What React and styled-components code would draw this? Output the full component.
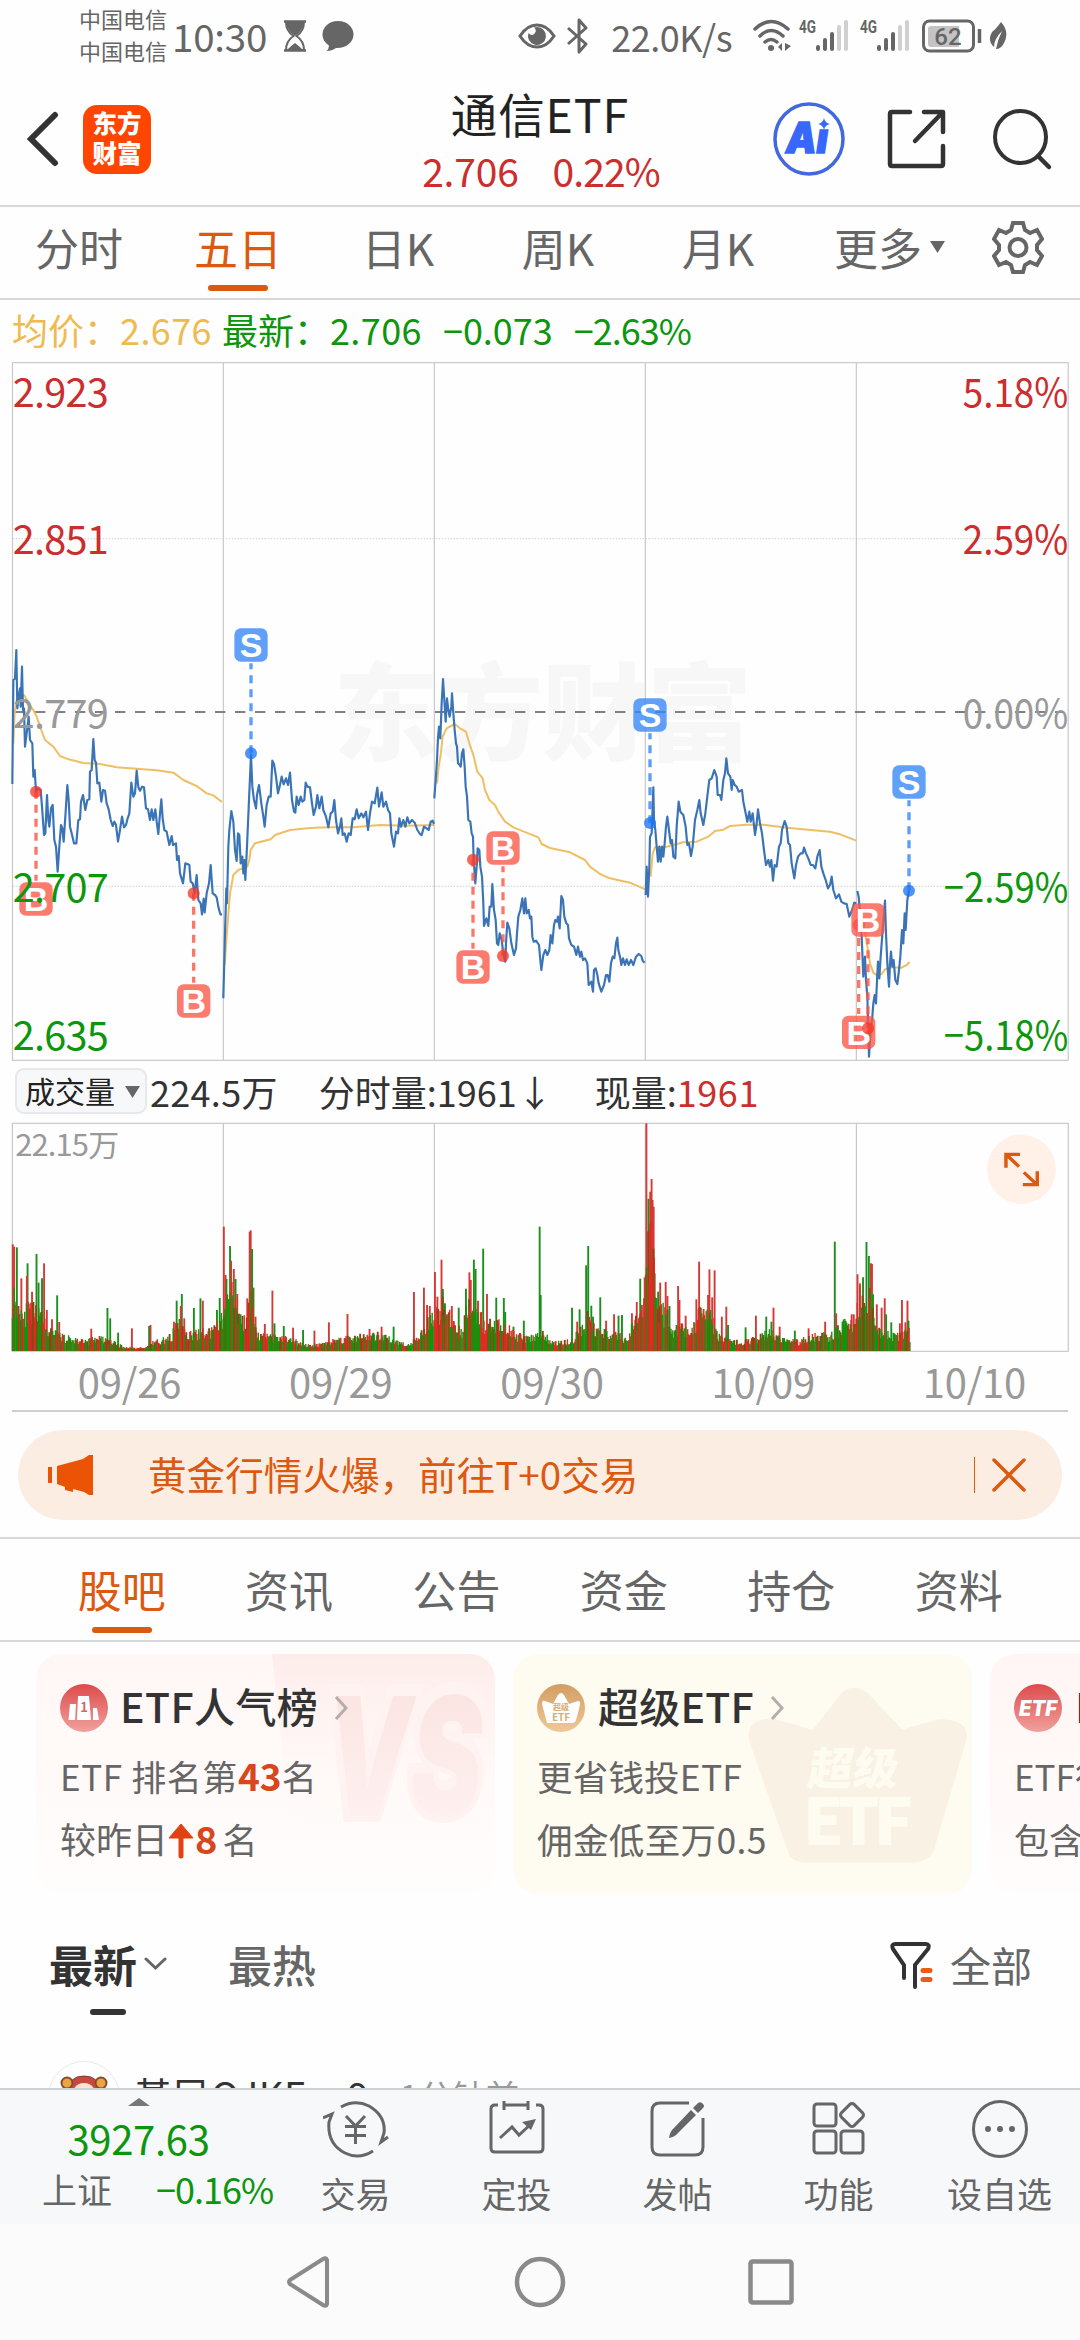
import styled, { createGlobalStyle } from 'styled-components';

const GlobalStyle = createGlobalStyle`
    * {
        box-sizing: border-box;
    }

    body {
        margin: 0;
        background: #fefefe;
        font-family: 'Noto Sans CJK SC', 'Noto Sans', sans-serif;
        color: #333;
    }

    svg {
        display: block;
        flex: none;
    }
`;

const Page = styled.div`
    width: 1080px;
    height: 2340px;
    overflow: hidden;
    display: flex;
    flex-direction: column;
    white-space: nowrap;
`;

const Text = styled.span`
    font-size: ${(p) => p.size || 35}px;
    line-height: ${(p) => p.line || 1};
    color: ${(p) => p.color || 'inherit'};
    font-weight: ${(p) => p.weight || 400};
    letter-spacing: ${(p) => p.spacing || 0}px;
    margin-left: ${(p) => p.left || 0}px;
    margin-top: ${(p) => p.top || 0}px;
`;

const StatusBar = styled.div`
    height: 76px;
    padding: 0 73px 4px 79px;
    display: flex;
    align-items: center;
    color: #666;
`;

const Carriers = styled.div`
    display: flex;
    flex-direction: column;
    font-size: 22px;
    line-height: 32px;
    width: 93px;
    padding-bottom: 3px;
`;

const StatusIcons = styled.div`
    margin-left: auto;
    display: flex;
    align-items: center;
`;

const Header = styled.header`
    height: 131px;
    border-bottom: 2px solid #d8d8d8;
    display: grid;
    grid-template-columns: 360px 360px 360px;
`;

const HeaderSide = styled.div`
    display: flex;
    align-items: center;
    padding: 0 27px 2px;
`;

const Logo = styled.div`
    width: 68px;
    height: 69px;
    margin-left: 24px;
    border-radius: 14px;
    background: #ff4500;
    color: #fff;
    font-size: 24.5px;
    font-weight: 900;
    line-height: 30px;
    text-align: center;
    padding-top: 3px;
`;

const HeaderTitle = styled.div`
    display: flex;
    flex-direction: column;
    align-items: center;
    padding-top: 14px;
`;

const PriceLine = styled.div`
    display: flex;
    gap: 34px;
    margin: 15px 0 0 2px;
    color: #cc2d2d;
`;

const PeriodTabs = styled.nav`
    height: 93px;
    border-bottom: 2px solid #d8d8d8;
    display: grid;
    grid-template-columns: 158px 160px 160px 160px 160px 172px 110px;
    color: #666;
`;

const Tab = styled.div`
    display: flex;
    flex-direction: column;
    align-items: center;
    font-size: ${(p) => p.size || 44}px;
    line-height: 1;
    padding-top: ${(p) => p.top}px;
    color: ${(p) => (p.active ? '#dc5a10' : '#666')};

    &::after {
        content: '';
        display: ${(p) => (p.active ? 'block' : 'none')};
        width: 60px;
        height: 6px;
        margin-top: ${(p) => p.gap}px;
        border-radius: 3px;
        background: #dc5a10;
    }
`;

const MoreTab = styled.div`
    display: flex;
    align-items: flex-start;
    gap: 8px;
    padding: 18px 0 0 36px;

    svg {
        margin-top: 16px;
    }
`;

const GearTab = styled.div`
    padding: 14px 0 0 22px;
`;

const QuoteRow = styled.div`
    height: 62px;
    padding: 0 0 3px 12px;
    display: flex;
    align-items: center;
    color: #0d960d;
`;

const VolumeRow = styled.div`
    height: 60px;
    padding: 0 0 2px 15px;
    display: flex;
    align-items: center;
`;

const Picker = styled.div`
    width: 132px;
    height: 46px;
    display: flex;
    align-items: center;
    gap: 10px;
    padding: 0 9px 3px 8px;
    border: 2px solid #e6e8eb;
    border-radius: 9px;
    background: #f7f8fa;
    color: #222;
    font-size: 30px;
    line-height: 1;

    svg {
        margin-top: 4px;
    }
`;

const DateRow = styled.div`
    height: 60px;
    margin: 0 12px;
    border-bottom: 2px solid #d0d0d0;
    display: grid;
    grid-template-columns: repeat(5, 1fr);
    align-items: center;
    justify-items: center;
    color: #999;

    span {
        padding-left: 24px;
    }
`;

const Banner = styled.div`
    height: 90px;
    margin: 18px 18px 17px;
    border-radius: 45px;
    background: #fcede3;
    color: #dc5a10;
    display: flex;
    align-items: center;
    padding: 0 36px 0 30px;
`;

const BannerText = styled.div`
    margin: 0 auto 3px 54px;
    font-size: 38.6px;
    line-height: 1;
`;

const BannerEnd = styled.div`
    display: flex;
    align-items: center;
    gap: 17px;

    &::before {
        content: '';
        width: 1px;
        height: 36px;
        background: #dc5a10;
    }
`;

const SectionTabs = styled.nav`
    height: 105px;
    border-top: 2px solid #d8d8d8;
    border-bottom: 2px solid #d8d8d8;
    padding: 0 38px;
    display: grid;
    grid-template-columns: repeat(6, 167.4px);
`;

const Cards = styled.div`
    height: 241px;
    margin-top: 12px;
    padding-left: 36px;
    display: flex;
    gap: 18px;
    overflow: hidden;
`;

const Card = styled.div`
    position: relative;
    flex: none;
    width: 459px;
    height: 240px;
    border-radius: 25px;
    overflow: hidden;
    background: ${(p) => p.fill};
    padding: 30px 24px;
    color: #666;
`;

const CardArt = styled.svg`
    position: absolute;
    inset: 0;
`;

const CardBody = styled.div`
    position: relative;
    display: flex;
    flex-direction: column;
`;

const CardTitle = styled.div`
    height: 48px;
    display: flex;
    align-items: center;
    color: #333;
    margin-bottom: 26px;

    span {
        margin-bottom: 4px;
    }
`;

const CardLine = styled.div`
    height: 35px;
    margin-bottom: 28px;
    display: flex;
    align-items: center;

    svg {
        margin-top: 6px;
    }
`;

const FeedTabs = styled.div`
    height: 150px;
    padding: 47px 48px 0 48px;
    display: flex;
    align-items: flex-start;
`;

const FeedActive = styled.div`
    display: flex;
    flex-direction: column;
    align-items: center;
    width: 120px;

    &::after {
        content: '';
        width: 36px;
        height: 6px;
        margin-top: 23px;
        border-radius: 3px;
        background: #333;
    }
`;

const FeedActiveLabel = styled.div`
    display: flex;
    align-items: center;
    gap: 7px;
`;

const FeedFilter = styled.div`
    margin: -1px 0 0 auto;
    display: flex;
    align-items: center;
    gap: 16px;
`;

const Post = styled.div`
    height: 44px;
    padding: 17px 0 0 48px;
    display: flex;
    align-items: flex-start;
    overflow: hidden;
`;

const PostAuthor = styled.div`
    width: 240px;
    margin: 7px 26px 0 14px;
    font-size: 38px;
    letter-spacing: 0.5px;
    line-height: 52px;
`;

const PostTime = styled.div`
    margin-top: 11px;
    font-size: 33px;
    line-height: 46px;
    letter-spacing: 0.6px;
    color: #999;
`;

const BottomBar = styled.footer`
    height: 136px;
    border-top: 2px solid #ccd2d6;
    background: #f6f8fa;
    display: grid;
    grid-template-columns: 275px 161px 161px 161px 161px 161px;
    color: #666;
`;

const IndexCell = styled.div`
    display: flex;
    flex-direction: column;
    align-items: center;
    padding-top: 8px;
    padding-left: 2px;
    color: #0d960d;
`;

const IndexChange = styled.div`
    display: flex;
    align-items: center;
    gap: 44px;
    align-self: flex-start;
    margin: 12px 0 0 40px;
`;

const BarItem = styled.div`
    display: flex;
    flex-direction: column;
    align-items: center;
    gap: 15px;
    padding-top: 8px;
    font-size: 35px;
    line-height: 1;
`;

const SystemNav = styled.div`
    height: 116px;
    background: #fbfbfb;
    display: flex;
    justify-content: center;
    align-items: center;
    gap: 182px;
`;

// Price traces, one per session, with the offset that places each in the chart.
const sessions = [
    {
        dx: 0,
        dy: 0,
        price: '37,552 40,240 45,236 49,150 52,325 56,290 60,265 62,320 66,200 69,330 72,325 75,440 80,400 86,350 90,420 97,430 100,530 104,510 108,575 114,565 122,570 126,620 132,705 136,700 141,585 145,660 148,680 153,625 158,615 163,720 168,740 173,815 178,740 183,675 187,685 191,725 196,650 202,555 206,600 210,680 215,700 222,730 229,730 235,660 240,658 243,605 249,585 256,630 262,600 268,598 270,515 275,510 280,417 284,480 288,488 292,550 298,548 304,605 309,570 315,572 320,610 326,628 332,660 338,678 343,665 348,675 354,725 360,690 366,650 372,682 378,675 383,655 388,640 394,548 400,590 405,580 410,512 415,562 420,572 426,560 432,562 438,625 444,628 450,660 455,628 460,660 466,628 470,665 475,702 480,640 484,598 488,655 493,690 500,695 508,735 515,708 519,735 528,730 531,780 536,768 540,820 549,850 556,790 562,792 568,795 572,845 578,850 584,880 590,825 595,900 602,910 606,943 611,896 614,937 620,880 627,850 632,795 638,880 645,885 650,892 656,925 661,943 666,943',
        average: '40,430 44,340 50,300 60,290 72,285 80,298 90,318 100,330 110,350 122,385 135,420 160,440 180,468 200,476 250,489 300,492 350,502 410,506 470,511 520,518 550,540 590,558 620,580 640,586 666,606',
    },
    {
        dx: 0,
        dy: 0,
        price: '670,1195 675,1000 679,865 681,910 685,740 688,690 694,633 700,665 705,750 710,783 714,700 718,705 722,790 727,770 730,820 733,780 736,840 741,740 747,600 753,465 757,560 762,600 768,625 771,585 777,555 784,610 790,650 794,680 800,615 806,590 812,590 817,482 822,492 828,530 834,580 840,555 845,530 851,553 858,535 864,555 870,518 876,600 882,635 886,638 890,590 896,615 902,590 907,605 913,600 917,548 922,560 930,562 936,610 941,645 948,620 952,585 958,625 965,590 970,630 978,650 985,682 992,640 998,635 1003,600 1008,660 1014,700 1020,680 1024,655 1028,705 1034,700 1040,725 1046,700 1052,705 1058,655 1064,658 1070,628 1076,655 1084,640 1090,652 1098,635 1104,690 1110,640 1116,605 1124,610 1132,563 1137,620 1145,577 1150,620 1158,605 1164,630 1170,640 1174,700 1182,740 1188,695 1194,700 1198,655 1203,680 1210,660 1216,680 1222,652 1228,670 1236,660 1244,668 1252,690 1260,702 1265,705 1272,680 1280,685 1286,690 1292,665 1298,662 1302,672',
        average: '674,1095 682,980 690,880 700,825 715,810 742,800 748,780 752,750 765,730 812,718 825,705 870,690 930,684 985,682 1060,682 1140,675 1220,677 1302,675',
    },
    {
        dx: 1260,
        dy: 60,
        price: '43,535 47,480 51,420 54,355 57,320 61,355 65,250 69,177 73,240 77,305 81,235 85,270 89,290 94,260 96,220 100,280 104,330 108,370 111,380 114,430 119,435 122,440 126,400 130,388 134,440 137,500 141,530 145,600 151,605 155,640 159,650 161,720 166,790 170,740 173,685 178,690 181,740 186,770 190,850 192,918 199,895 205,918 209,860 214,860 217,792 222,870 227,900 231,970 235,975 239,940 245,960 250,1000 256,1025 258,970 262,908 268,925 274,970 282,1005 288,985 291,940 295,890 301,870 307,835 312,880 316,835 320,880 326,870 330,895 334,890 337,950 341,965 348,962 357,975 360,1010 364,1050 370,1005 376,990 382,1005 388,990 392,945 397,970 402,915 406,900 411,905 414,890 419,925 424,828 429,840 433,890 439,910 444,915 447,955 454,975 462,980 469,1005 474,980 480,1010 484,995 489,1020 495,1015 502,1030 506,1095 514,1085 519,1115 522,1050 527,1045 532,1065 536,1090 544,1115 552,1095 558,1065 563,1065 568,1085 573,1030 578,1010 583,1015 588,970 592,953 595,990 600,1010 604,1035 609,1015 615,1035 620,1018 626,1035 633,1020 640,1035 648,1010 656,1002 664,1008 668,1022 674,1028',
        average: '51,490 56,440 62,405 68,350 80,325 104,312 120,325 138,335 148,370 160,405 172,455 188,475 195,510 208,540 225,555 235,575 255,605 280,622 355,652 365,672 390,684 450,697 495,720 510,740 540,762 570,775 630,788 676,808',
    },
    {
        dx: 1920,
        dy: 240,
        price: '17,645 20,560 24,650 28,560 30,470 35,460 40,322 42,420 46,450 50,500 54,545 58,500 62,545 66,500 70,530 74,490 78,440 82,410 87,450 92,490 96,480 100,530 106,535 110,440 116,365 121,395 130,405 137,440 142,495 147,490 153,528 158,500 165,420 172,390 178,360 182,400 190,435 196,400 203,340 208,300 215,295 223,270 230,290 233,345 240,345 244,360 250,300 255,280 259,235 264,280 271,290 275,330 278,300 284,315 290,320 296,335 306,330 310,365 317,400 322,425 328,395 332,425 338,400 345,465 350,430 354,388 360,430 366,460 372,510 378,555 385,540 390,560 394,540 399,602 404,555 410,560 417,500 422,490 426,450 434,423 440,440 445,490 450,495 455,550 463,595 468,555 474,530 482,520 488,520 492,503 498,520 505,535 512,555 519,555 526,565 532,530 539,510 544,560 550,580 557,600 564,625 570,615 575,590 580,630 588,655 597,643 604,665 612,670 620,672 628,710 636,690 643,668 649,670',
        average: '32,590 38,520 45,502 80,500 130,487 170,485 205,470 225,453 250,449 270,438 320,434 370,434 440,443 570,455 600,463 649,482',
    },
    {
        dx: 1920,
        dy: 240,
        price: '652,633 656,650 660,700 665,770 670,890 675,830 678,900 682,950 685,1050 687,1130 692,1050 697,1010 700,970 704,945 708,970 712,880 714,845 718,895 722,830 728,750 735,662 738,760 742,850 747,920 750,850 753,815 757,860 761,840 766,900 772,912 777,870 781,830 786,750 790,790 794,700 797,750 802,660 807,632',
        average: '665,690 672,740 682,800 690,850 700,878 712,887 725,882 735,868 750,862 785,863 800,855 809,846',
    },
];

// x, dot y, tag y
const trades = [
    ['B', 108, 575, 897],
    ['B', 581, 880, 1203],
    ['S', 753, 460, 135],
    ['B', 1419, 779, 1101],
    ['B', 1509, 1068, 744],
    ['S', 1950, 669, 345],
    ['B', 2576, 975, 1297],
    ['B', 2604, 1285, 960],
    ['S', 2727, 872, 546],
];

const priceLabels = [
    ['2.923', '5.18%', -580, '#cc2d2d'],
    ['2.851', '2.59%', -137, '#cc2d2d'],
    ['2.779', '0.00%', 384, '#999'],
    ['2.707', '−2.59%', 907, '#0d960d'],
    ['2.635', '−5.18%', 1351, '#0d960d'],
];

const dividers = [670, 1303, 1936, 2569];

function PriceChart() {
    return (
        <svg width="1080" height="701" viewBox="0 -717 3240 2103">
            <text x="1000" y="455" fontSize="316" fontWeight="900" fill="#f7f7f7" textLength="1256">东方财富</text>
            <g stroke="#c8c8c8" strokeWidth="3.500" fill="none">
                <rect x="37.500" y="-712" width="3167" height="2093" />
                {dividers.map((x) => <line key={x} x1={x} x2={x} y1="-712" y2="1381" />)}
                <path d="M38 -184H3204M38 859H3204" strokeDasharray="3 6" />
            </g>
            <path d="M45 336H3190" stroke="#808080" strokeWidth="6" strokeDasharray="31 29" />
            {sessions.map((s, i) => (
                <g key={i} transform={`translate(${s.dx} ${s.dy})`} fill="none" strokeLinejoin="round">
                    <polyline points={s.average} stroke="#eebf63" strokeWidth="6" />
                    <polyline points={s.price} stroke="#3a74b6" strokeWidth="6.500" />
                </g>
            ))}
            {trades.map(([side, x, dot, tag], i) => {
                const color = side === 'B' ? '#fa5746' : '#3485f7';
                const dir = tag > dot ? -1 : 1;
                return (
                    <g key={i}>
                        <line x1={x} x2={x} y1={tag + dir * 55} y2={dot} stroke={color} strokeWidth="10" strokeDasharray="24 18" strokeDashoffset="6" opacity="0.8" />
                        <circle cx={x} cy={dot} r="18" fill={side === 'B' ? '#f23a2c' : '#1c76f5'} opacity="0.78" />
                        <rect x={x - 50} y={tag - 50} width="100" height="100" rx="20" fill={color} opacity="0.78" />
                        <text x={x} y={tag + 37} fontSize="102" fontFamily="'Liberation Sans', sans-serif" fontWeight="700" fill="#fff" textAnchor="middle">{side}</text>
                    </g>
                );
            })}
            {priceLabels.map(([left, right, y, color]) => {
                const negative = right.length > 5;
                return (
                    <g key={left} fontSize="119" fill={color}>
                        <text x="38" y={y} textLength="288">{left}</text>
                        <text x={negative ? 2831 : 2888} y={y} textLength={negative ? 374 : 317} lengthAdjust="spacingAndGlyphs">{right}</text>
                    </g>
                );
            })}
        </svg>
    );
}

// Tops of the ordinary bars; the spikes below rise out of them.
const volumeBase = [
    [35, 700], [60, 760], [100, 770], [128, 800], [145, 840], [170, 848], [200, 860], [240, 868], [290, 858], [330, 875], [360, 890], [420, 893], [450, 870], [490, 860], [520, 810], [545, 850], [580, 840], [620, 835], [645, 790], [660, 690], [680, 690], [700, 800], [715, 800], [730, 700], [745, 850], [790, 855], [830, 860], [900, 885], [960, 870], [1000, 858], [1100, 850], [1150, 870], [1190, 880], [1220, 840], [1250, 800], [1285, 740], [1310, 800], [1340, 840], [1360, 750], [1385, 750], [1400, 800], [1430, 810], [1460, 820], [1490, 840], [1520, 860], [1568, 850],
    [1573, 840], [1608, 875], [1658, 870], [1688, 830], [1708, 790], [1728, 830], [1768, 840], [1818, 860], [1848, 800], [1873, 740], [1880, 520], [1898, 560], [1913, 750], [1938, 780], [1953, 840], [1978, 820], [2008, 840], [2028, 780], [2068, 790], [2083, 850], [2118, 865], [2148, 875], [2198, 860], [2228, 840], [2268, 860], [2318, 870], [2368, 850], [2418, 850], [2448, 815], [2483, 810], [2498, 710], [2528, 730], [2543, 830], [2568, 830], [2588, 850], [2608, 850], [2640, 840], [2644, 900],
];

const volumeSpikes = '37,583r 41,590r 49,592g 62,685r 80,640g 78,678r 93,725r 106,612g 112,698g 128,640r 122,685g 166,736g 136,780r 151,808r 172,816r 312,774g 320,805g 265,836r 343,848g 383,835r 433,828g 437,825r 513,752g 528,732g 525,768r 505,815r 563,774g 582,745g 589,752r 535,805r 638,744g 630,780g 650,530r 655,675r 668,588g 671,632r 679,657r 684,687g 689,732r 718,745r 725,545r 728,541r 732,597g 736,713g 742,800r 791,722r 797,820g 769,822r 824,828g 851,833r 880,840g 913,842r 955,817r 1009,792r 1108,830r 1143,830g 1073,837r 1202,726r 1231,713r 1240,765r 1248,768r 1263,666r 1282,629r 1286,717g 1270,740r 1292,760g 1312,768r 1332,773g 1353,716g 1363,667r 1367,690r 1376,629g 1381,657g 1388,752r 1403,596g 1414,732r 1441,743g 1463,744g 1467,786g 1521,812g 1491,830g 1567,530g 1570,735g 1661,773g 1683,778g 1702,646g 1708,588g 1717,767g 1743,742g 1676,815r 1722,800g 1760,812r 1783,793r 1796,797g 1806,795g 1835,790r 1849,756r 1859,686g 1864,765r 1872,682r 1877,220r 1883,446g 1888,425r 1892,387r 1895,450r 1898,470r 1901,670g 1906,744g 1911,725g 1917,698r 1933,696r 1938,738r 1944,768g 1969,708r 1973,750r 1991,797r 2022,748r 2030,635r 2035,773g 2043,777r 2060,658r 2056,735r 2068,742r 2075,661r 2096,800r 2109,770r 2114,825g 2165,832g 2195,797r 2225,800g 2246,773r 2240,815g 2264,830r 2308,842g 2348,835r 2396,815r 2424,575g 2428,790r 2450,808g 2473,793r 2479,793r 2490,673r 2497,700r 2506,682g 2516,576g 2523,618g 2529,640r 2532,642r 2535,733g 2546,763r 2560,773r 2569,745r 2573,793g 2588,817g 2613,820r 2619,750r 2629,817r 2635,752r 2638,812g';

function baseTop(x) {
    for (let i = 1; i < volumeBase.length; i++) {
        const [x0, y0] = volumeBase[i - 1];
        const [x1, y1] = volumeBase[i];
        if (x <= x1) return y0 + ((y1 - y0) * (x - x0)) / (x1 - x0);
    }
    return 900;
}

function volumePaths() {
    const paths = { r: '', g: '', dark: '' };
    let seed = 11;
    const next = () => {
        seed = (seed * 16807) % 2147483647;
        return seed / 2147483647;
    };
    for (let x = 36; x < 2644; x += 2.55) {
        const top = 903 - (903 - baseTop(x)) * (0.5 + next() * 0.6);
        const pick = next();
        const kind = pick < 0.38 ? 'r' : pick < 0.72 ? 'g' : 'dark';
        paths[kind] += `M${x.toFixed(1)} 903V${top.toFixed(0)}`;
    }
    return paths;
}

function VolumeChart() {
    const paths = volumePaths();
    return (
        <svg width="1080" height="230" viewBox="0 216 3136 690" preserveAspectRatio="none">
            <g stroke="#c8c8c8" strokeWidth="3.500" fill="none">
                <rect x="36" y="220" width="3066" height="684" />
                {dividers.map((x) => <line key={x} x1={x * 0.968} x2={x * 0.968} y1="220" y2="904" />)}
            </g>
            <text x="44" y="318" fontSize="90" fill="#999" textLength="302">22.15万</text>
            <g strokeWidth="5.500" fill="none">
                {volumeSpikes.split(' ').map((s) => {
                    const [x, y] = s.slice(0, -1).split(',');
                    return <path key={s} d={`M${x} 903V${y}`} stroke={s.endsWith('r') ? '#d43a35' : '#1b8f1b'} />;
                })}
                <path d={paths.dark} stroke="#824a13" />
                <path d={paths.r} stroke="#e02a24" strokeWidth="4" />
                <path d={paths.g} stroke="#109409" strokeWidth="4" />
            </g>
            <ellipse cx="2966" cy="358" rx="100" ry="104" fill="#fff0e8" />
            <path d="M2921 353V313H2962M2923 315L2959 350M2973 367L3011 404M2970 404H3012V364" fill="none" stroke="#dc5a10" strokeWidth="10" />
        </svg>
    );
}

const Down = ({ size = 15 }) => (
    <svg width={size} height="12" viewBox="0 0 15 12"><path d="M0 0H15L7.5 12Z" fill="#666" /></svg>
);

const ChevronIcon = styled.svg`
    margin-left: 16px;
`;

const Chevron = () => (
    <ChevronIcon width="14" height="26" viewBox="0 0 14 26">
        <path d="M2 2L12 13L2 24" fill="none" stroke="#b3adab" strokeWidth="3" />
    </ChevronIcon>
);

const StatusIcon = styled.svg`
    margin-left: ${(p) => p.$left}px;
`;

const Signal = ({ left }) => (
    <StatusIcon $left={left} width="50" height="34" viewBox="0 0 50 34">
        <text x="0" y="14" fontSize="17.500" fontWeight="700" fontFamily="Roboto, sans-serif" fill="#666" textLength="17" lengthAdjust="spacingAndGlyphs">4G</text>
        <path d="M19 28V30M26 21V30M33 15V30" stroke="#666" strokeWidth="4" strokeLinecap="round" />
        <path d="M40 8V30M47 3V30" stroke="#d0d0d0" strokeWidth="4" strokeLinecap="round" />
    </StatusIcon>
);

const PodiumIcon = () => (
    <svg width="48" height="48" viewBox="0 0 48 48">
        <defs>
            <linearGradient id="red" x1="0" y1="0" x2="0" y2="1">
                <stop offset="0" stopColor="#dc4b4a" />
                <stop offset="1" stopColor="#f0a19e" />
            </linearGradient>
        </defs>
        <circle cx="24" cy="24" r="24" fill="url(#red)" />
        <path d="M10 20H16L15 36H8.500ZM18 12H29L31 36H17ZM33 24H37L39 36H33Z" fill="#fff" />
        <text x="24" y="28" fontSize="13" fontWeight="700" textAnchor="middle" fill="#dc6463">1</text>
    </svg>
);

const crown = 'M66 240Q45 242 41 228L2 77Q-4 46 21 43Q28 43 65 59L93 10Q104-7 120 8L155 58L192 44Q222 44 220 70L187 222Q183 240 164 240Z';

const CrownIcon = () => (
    <svg width="48" height="48" viewBox="0 0 48 48">
        <defs>
            <linearGradient id="gold" x1="0" y1="0" x2="0" y2="1">
                <stop offset="0" stopColor="#d29e63" />
                <stop offset="1" stopColor="#efc797" />
            </linearGradient>
        </defs>
        <circle cx="24" cy="24" r="24" fill="url(#gold)" />
        <path d="M10 39L5 20Q5 16 8 17L16 20L21 11Q24 7 27 11L32 20L41 17Q44 17 43 21L39 36Q38 39 35 39Z" fill="#fff" />
        <text x="24" y="26" fontSize="8" fontWeight="700" textAnchor="middle" fill="#d9ac76">超级</text>
        <text x="24" y="36.500" fontSize="10" fontWeight="700" textAnchor="middle" fill="#d9ac76">ETF</text>
    </svg>
);

const periods = ['分时', '五日', '日K', '周K', '月K'];
const sections = ['股吧', '资讯', '公告', '资金', '持仓', '资料'];
const dates = ['09/26', '09/29', '09/30', '10/09', '10/10'];

function App() {
    return (
        <>
            <GlobalStyle />
            <Page>
                <StatusBar>
                    <Carriers>
                        <span>中国电信</span>
                        <span>中国电信</span>
                    </Carriers>
                    <Text size={38.5} line={1.4} spacing={-0.2}>10:30</Text>
                    <StatusIcon $left={16} width="24" height="32" viewBox="0 0 24 32">
                        <path d="M1 1.500H23M1 30.500H23" stroke="#666" strokeWidth="2.500" />
                        <path d="M3 2H21Q21 11 13.500 16Q21 21 21 30H3Q3 21 10.500 16Q3 11 3 2Z" fill="none" stroke="#666" strokeWidth="2" />
                        <path d="M3 2H21Q20 11 12 16Q4 11 3 2ZM5 29Q8 26 12 23Q16 26 19 29Z" fill="#666" />
                    </StatusIcon>
                    <StatusIcon $left={15} width="32" height="32" viewBox="0 0 32 32">
                        <path d="M16 1C7 1 .500 7 .500 14.500C.500 19 3 23 7 25.500Q7 29 4.500 31Q10 31 14 28C24 28.500 31.500 22 31.500 14.500C31.500 7 25 1 16 1Z" fill="#666" />
                    </StatusIcon>
                    <StatusIcons>
                        <svg width="38" height="28" viewBox="0 0 38 28">
                            <path d="M2 14Q9 3 19 3T36 14Q29 25 19 25T2 14Z" fill="none" stroke="#666" strokeWidth="3" />
                            <path d="M19 5A9 9 0 1 1 10.500 11Q14 15 17 11Q19 8 16 5.500Z" fill="#666" />
                        </svg>
                        <StatusIcon $left={11} width="22" height="36" viewBox="0 0 22 36">
                            <path d="M1 10L19 26L12 34V2L19 10L1 26" fill="none" stroke="#666" strokeWidth="3" strokeLinejoin="round" />
                        </StatusIcon>
                        <Text size={36} line={1.4} left={22} spacing={-0.5}>22.0K/s</Text>
                        <StatusIcon $left={21} width="38" height="33" viewBox="0 0 38 33">
                            <path d="M2 10Q18-5 35 10M7 17Q18 6 30 17M12 23Q18 18 24 23" fill="none" stroke="#666" strokeWidth="3.500" strokeLinecap="round" />
                            <circle cx="18" cy="29" r="3" fill="#666" />
                            <path d="M29 24V32L25 28ZM32 24V32L38 27Z" fill="#666" />
                        </StatusIcon>
                        <Signal left={8} />
                        <Signal left={11} />
                        <StatusIcon $left={12} width="60" height="34" viewBox="0 0 60 34">
                            <rect x="1.500" y="2" width="50" height="30" rx="6" fill="none" stroke="#666" strokeWidth="3" />
                            <path d="M6 10Q6 7 9 7H37V28H9Q6 28 6 25Z" fill="#c4c4c4" />
                            <path d="M57.500 10V24" stroke="#666" strokeWidth="3.500" />
                            <text x="26" y="26" fontSize="24" fontWeight="500" fontFamily="Roboto, sans-serif" fill="#666" textAnchor="middle">62</text>
                        </StatusIcon>
                        <StatusIcon $left={7} width="18" height="28" viewBox="0 0 18 28">
                            <path d="M12 0Q21 10 15 21Q12 27 7 27Q9 17 13 9Q5 17 5 25Q-2 19 3 10Q7 7 12 0Z" fill="#666" />
                        </StatusIcon>
                    </StatusIcons>
                </StatusBar>

                <Header>
                    <HeaderSide>
                        <svg width="32" height="56" viewBox="0 0 32 56">
                            <path d="M28 4L4 28L28 52" fill="none" stroke="#333" strokeWidth="6" strokeLinecap="round" strokeLinejoin="miter" />
                        </svg>
                        <Logo>东方<br />财富</Logo>
                    </HeaderSide>
                    <HeaderTitle>
                        <Text size={46.5} color="#222" spacing={0.9}>通信ETF</Text>
                        <PriceLine>
                            <Text size={39} spacing={-0.2}>2.706</Text>
                            <Text size={39} spacing={-0.9}>0.22%</Text>
                        </PriceLine>
                    </HeaderTitle>
                    <HeaderSide>
                        <StatusIcon $left={26} width="72" height="74" viewBox="0 0 72 74">
                            <ellipse cx="36" cy="37" rx="34" ry="35" fill="none" stroke="#4268dd" strokeWidth="3.500" />
                            <text x="13" y="51" fontSize="42" fontWeight="900" fontStyle="italic" fontFamily="Inter, sans-serif" fill="#3868fb" stroke="#3868fb" strokeWidth="1.500" textLength="42" lengthAdjust="spacingAndGlyphs">Aı</text>
                            <path d="M51 16Q52 21 57 22Q52 23 51 28Q50 23 45 22Q50 21 51 16Z" fill="#3868fb" />
                        </StatusIcon>
                        <StatusIcon $left={42} width="60" height="60" viewBox="0 0 60 60">
                            <path d="M23 3H5Q3 3 3 5V55Q3 57 5 57H54Q56 57 56 55V37M37 3H56V23M55 4L28 32" fill="none" stroke="#333" strokeWidth="4.500" strokeLinecap="round" strokeLinejoin="round" />
                        </StatusIcon>
                        <StatusIcon $left={44} width="62" height="64" viewBox="0 0 62 64">
                            <ellipse cx="29.500" cy="30" rx="25.500" ry="26" fill="none" stroke="#333" strokeWidth="4" />
                            <path d="M47 49L58 60" stroke="#333" strokeWidth="4.500" strokeLinecap="round" />
                        </StatusIcon>
                    </HeaderSide>
                </Header>

                <PeriodTabs>
                    {periods.map((p) => (
                        <Tab key={p} active={p === '五日' ? 1 : 0} top={18} gap={16}>{p}</Tab>
                    ))}
                    <MoreTab>
                        <Text size={44}>更多</Text>
                        <Down />
                    </MoreTab>
                    <GearTab>
                        <svg width="52" height="53" viewBox="0 0 52 53">
                            <path d="M21 2H31L33 9L38 12L45 9L50 18L45 24V29L50 35L45 44L38 41L33 44L31 51H21L19 44L14 41L7 44L2 35L7 29V24L2 18L7 9L14 12L19 9Z" fill="none" stroke="#666" strokeWidth="4" />
                            <circle cx="26" cy="26.500" r="8.500" fill="none" stroke="#666" strokeWidth="4" />
                        </svg>
                    </GearTab>
                </PeriodTabs>

                <QuoteRow>
                    <Text size={36} color="#eebb50">均价：</Text>
                    <Text size={36} color="#eebb50" spacing={0.4}>2.676</Text>
                    <Text size={36} left={10}>最新：</Text>
                    <Text size={36} spacing={0.4}>2.706</Text>
                    <Text size={36} left={21}>−0.073</Text>
                    <Text size={36} left={21} spacing={-1}>−2.63%</Text>
                </QuoteRow>

                <PriceChart />

                <VolumeRow>
                    <Picker>成交量<Down /></Picker>
                    <Text size={36} left={3} spacing={0.3}>224.5万</Text>
                    <Text size={36} left={41}>分时量:1961↓</Text>
                    <Text size={36} left={42}>现量:</Text>
                    <Text size={36} color="#cc2d2d" spacing={0.6}>1961</Text>
                </VolumeRow>

                <VolumeChart />

                <DateRow>
                    {dates.map((d) => <Text key={d} size={40} spacing={-0.2}>{d}</Text>)}
                </DateRow>

                <Banner>
                    <svg width="46" height="42" viewBox="0 0 46 42">
                        <path d="M2 13V29" stroke="#ea5404" strokeWidth="4" />
                        <path d="M9 12L35 5L41 1H45V41H41L36 38L25 35V38L17 36V33L9 30Z" fill="#ea5404" />
                    </svg>
                    <BannerText>黄金行情火爆，前往T+0交易</BannerText>
                    <BannerEnd>
                        <svg width="34" height="34" viewBox="0 0 34 34">
                            <path d="M2 2L32 32M32 2L2 32" stroke="#dc5a10" strokeWidth="3.500" strokeLinecap="round" />
                        </svg>
                    </BannerEnd>
                </Banner>

                <SectionTabs>
                    {sections.map((s) => (
                        <Tab key={s} active={s === '股吧' ? 1 : 0} top={28} gap={16}>{s}</Tab>
                    ))}
                </SectionTabs>

                <Cards>
                    <Card fill="linear-gradient(#fff7f5, #fffdfc)">
                        <CardArt width="459" height="240" viewBox="0 0 459 240">
                            <defs>
                                <linearGradient id="fade" x1="0" y1="0" x2="0" y2="1">
                                    <stop offset="0" stopColor="#fdecea" />
                                    <stop offset="0.750" stopColor="#fffaf9" stopOpacity="0" />
                                </linearGradient>
                                <linearGradient id="versus" x1="0" y1="0" x2="0" y2="1">
                                    <stop offset="0.200" stopColor="#fbe5e3" />
                                    <stop offset="1" stopColor="#fef4f3" />
                                </linearGradient>
                            </defs>
                            <path d="M236 0H459V240H262Z" fill="url(#fade)" />
                            <text x="288" y="160" fontSize="168" fontWeight="900" fontStyle="italic" fontFamily="Inter, sans-serif" fill="none" stroke="#fff3f1" strokeWidth="16" textLength="158" lengthAdjust="spacingAndGlyphs">VS</text>
                            <text x="290" y="162" fontSize="165" fontWeight="900" fontStyle="italic" fontFamily="Inter, sans-serif" fill="url(#versus)" textLength="156" lengthAdjust="spacingAndGlyphs">VS</text>
                        </CardArt>
                        <CardBody>
                            <CardTitle>
                                <PodiumIcon />
                                <Text size={41} weight={500} left={12} spacing={0.4}>ETF人气榜</Text>
                                <Chevron />
                            </CardTitle>
                            <CardLine>
                                <Text size={35} spacing={0.6}>ETF 排名第</Text>
                                <Text size={37} weight={700} color="#d8461b">43</Text>
                                <Text size={35}>名</Text>
                            </CardLine>
                            <CardLine>
                                <Text size={36}>较昨日</Text>
                                <svg width="26" height="36" viewBox="0 0 26 36">
                                    <path d="M13 1L25 15H1Z" fill="#e24213" stroke="#e24213" strokeLinejoin="round" />
                                    <path d="M13 12V33" stroke="#e24213" strokeWidth="5" strokeLinecap="round" />
                                </svg>
                                <Text size={38} weight={700} color="#d8461b" left={1}>8</Text>
                                <Text size={35} left={5}>名</Text>
                            </CardLine>
                        </CardBody>
                    </Card>
                    <Card fill="#fefbf0">
                        <CardArt width="459" height="240" viewBox="0 0 459 240">
                            <g transform="translate(235 33) scale(.995 .731)">
                                <path d={crown} fill="#f9f1e3" />
                            </g>
                            <g fontWeight="900" fill="#fefbf0">
                                <text x="294" y="131" fontSize="45" transform="skewX(-8) translate(18 0)">超级</text>
                                <text x="290" y="191" fontSize="65" textLength="110">ETF</text>
                            </g>
                        </CardArt>
                        <CardBody>
                            <CardTitle>
                                <CrownIcon />
                                <Text size={41} weight={500} left={13} spacing={0.2}>超级ETF</Text>
                                <Chevron />
                            </CardTitle>
                            <CardLine><Text size={35.500} spacing={0.2}>更省钱投ETF</Text></CardLine>
                            <CardLine><Text size={35.500} spacing={0.4}>佣金低至万0.5</Text></CardLine>
                        </CardBody>
                    </Card>
                    <Card fill="linear-gradient(#fff5f4, #fffdfc)">
                        <CardBody>
                            <CardTitle>
                                <svg width="48" height="48" viewBox="0 0 48 48">
                                    <circle cx="24" cy="24" r="24" fill="url(#red)" />
                                    <text x="5" y="32" fontSize="21" fontWeight="900" fontStyle="italic" fontFamily="Inter, sans-serif" fill="#fff" textLength="38" lengthAdjust="spacingAndGlyphs">ETF</text>
                                </svg>
                                <Text size={41} weight={500} left={13}>ETF</Text>
                            </CardTitle>
                            <CardLine><Text size={35}>ETF行情</Text></CardLine>
                            <CardLine><Text size={35}>包含全部</Text></CardLine>
                        </CardBody>
                    </Card>
                </Cards>

                <FeedTabs>
                    <FeedActive>
                        <FeedActiveLabel>
                            <Text size={44} weight={700}>最新</Text>
                            <svg width="23" height="14" viewBox="0 0 23 14">
                                <path d="M2 2L11.500 11L21 2" fill="none" stroke="#666" strokeWidth="3" strokeLinecap="round" />
                            </svg>
                        </FeedActiveLabel>
                    </FeedActive>
                    <Text size={44} weight={500} color="#666" left={60}>最热</Text>
                    <FeedFilter>
                        <svg width="44" height="48" viewBox="0 0 44 48">
                            <path d="M14 37V24L3 8Q1 3 5 3H36Q40 3 38 8L25 24V46" fill="none" stroke="#333" strokeWidth="4" strokeLinecap="round" />
                            <path d="M33 29.500H40M33 38.500H40" stroke="#ea5c14" strokeWidth="5" strokeLinecap="round" />
                        </svg>
                        <Text size={41} color="#666">全部</Text>
                    </FeedFilter>
                </FeedTabs>

                <Post>
                    <svg width="72" height="72" viewBox="0 0 72 72">
                        <circle cx="36" cy="36" r="35.500" fill="#fff" stroke="#e8e8e8" />
                        <path d="M20 32Q20 15 36 15T52 32Z" fill="#c9483f" stroke="#7d3c31" />
                        <path d="M24 34Q26 22 36 22T48 34Z" fill="#fbe3d5" />
                        <circle cx="19" cy="22" r="5.500" fill="#e9a540" stroke="#8a4b2c" strokeWidth="2" />
                        <circle cx="53" cy="22" r="5.500" fill="#e9a540" stroke="#8a4b2c" strokeWidth="2" />
                    </svg>
                    <PostAuthor>基民QJKFae9</PostAuthor>
                    <PostTime>1分钟前</PostTime>
                </Post>

                <BottomBar>
                    <IndexCell>
                        <svg width="22" height="8" viewBox="0 0 22 8"><path d="M0 8L11 0L22 8Z" fill="#777" /></svg>
                        <Text size={40} spacing={-0.3} top={12}>3927.63</Text>
                        <IndexChange>
                            <Text size={35} color="#666">上证</Text>
                            <Text size={36} spacing={-1}>−0.16%</Text>
                        </IndexChange>
                    </IndexCell>
                    <BarItem>
                        <svg width="66" height="62" viewBox="0 0 66 62">
                            <g fill="none" stroke="#666" strokeWidth="3">
                                <path d="M18 9Q32 1 46 8Q63 18 61 35L58 44L65 39M50 53Q36 62 22 55Q4 46 6 24L9 16L0 20" />
                                <path d="M23 18L32.500 28L42 18M22 28.500H43M22 37.500H43M32.500 28V46" />
                            </g>
                        </svg>
                        交易
                    </BarItem>
                    <BarItem>
                        <svg width="58" height="62" viewBox="0 0 58 62">
                            <path d="M10 7H7Q3 7 3 11V50Q3 54 7 54H51Q55 54 55 50V11Q55 7 51 7H48M16 3V12M40 3V12M16 7H40" fill="none" stroke="#666" strokeWidth="3" />
                            <path d="M12 40L24 29L31 37L44 25" fill="none" stroke="#666" strokeWidth="3" />
                            <path d="M34 24L48 21L43 32Z" fill="#666" />
                        </svg>
                        定投
                    </BarItem>
                    <BarItem>
                        <svg width="58" height="62" viewBox="0 0 58 62">
                            <path d="M40 5H11Q3 5 3 13V49Q3 57 11 57H46Q54 57 54 49V20" fill="none" stroke="#666" strokeWidth="3" />
                            <path d="M20 40Q21 33 25 30L42 12L47 17L29 35Q26 39 20 40ZM44 10L49 5Q52 3 54 6Q56 8 54 10L49 15Z" fill="#666" />
                        </svg>
                        发帖
                    </BarItem>
                    <BarItem>
                        <svg width="58" height="62" viewBox="0 0 58 62">
                            <g fill="none" stroke="#666" strokeWidth="3">
                                <rect x="4" y="6" width="22" height="22" rx="3" />
                                <rect x="4" y="33" width="22" height="22" rx="3" />
                                <rect x="31" y="33" width="22" height="22" rx="3" />
                                <rect x="33" y="8" width="18" height="18" rx="3" transform="rotate(45 42 17)" />
                            </g>
                        </svg>
                        功能
                    </BarItem>
                    <BarItem>
                        <svg width="58" height="62" viewBox="0 0 58 62">
                            <ellipse cx="29" cy="31" rx="26.500" ry="27.500" fill="none" stroke="#666" strokeWidth="3" />
                            <path d="M17 31H17.010M29 31H29.010M41 31H41.010" stroke="#666" strokeWidth="6" strokeLinecap="round" />
                        </svg>
                        设自选
                    </BarItem>
                </BottomBar>

                <SystemNav>
                    <svg width="46" height="56" viewBox="0 0 46 56">
                        <path d="M41 6V50Q40 53 37 51L4 30Q2 28 4 26L37 5Q40 3 41 6Z" fill="none" stroke="#8a8a8a" strokeWidth="4" strokeLinejoin="round" />
                    </svg>
                    <svg width="52" height="52" viewBox="0 0 52 52">
                        <circle cx="26" cy="26" r="23" fill="none" stroke="#8a8a8a" strokeWidth="4.500" />
                    </svg>
                    <svg width="46" height="46" viewBox="0 0 46 46">
                        <rect x="2.500" y="2.500" width="41" height="41" rx="2" fill="none" stroke="#8a8a8a" strokeWidth="4.500" />
                    </svg>
                </SystemNav>
            </Page>
        </>
    );
}

export default App;
